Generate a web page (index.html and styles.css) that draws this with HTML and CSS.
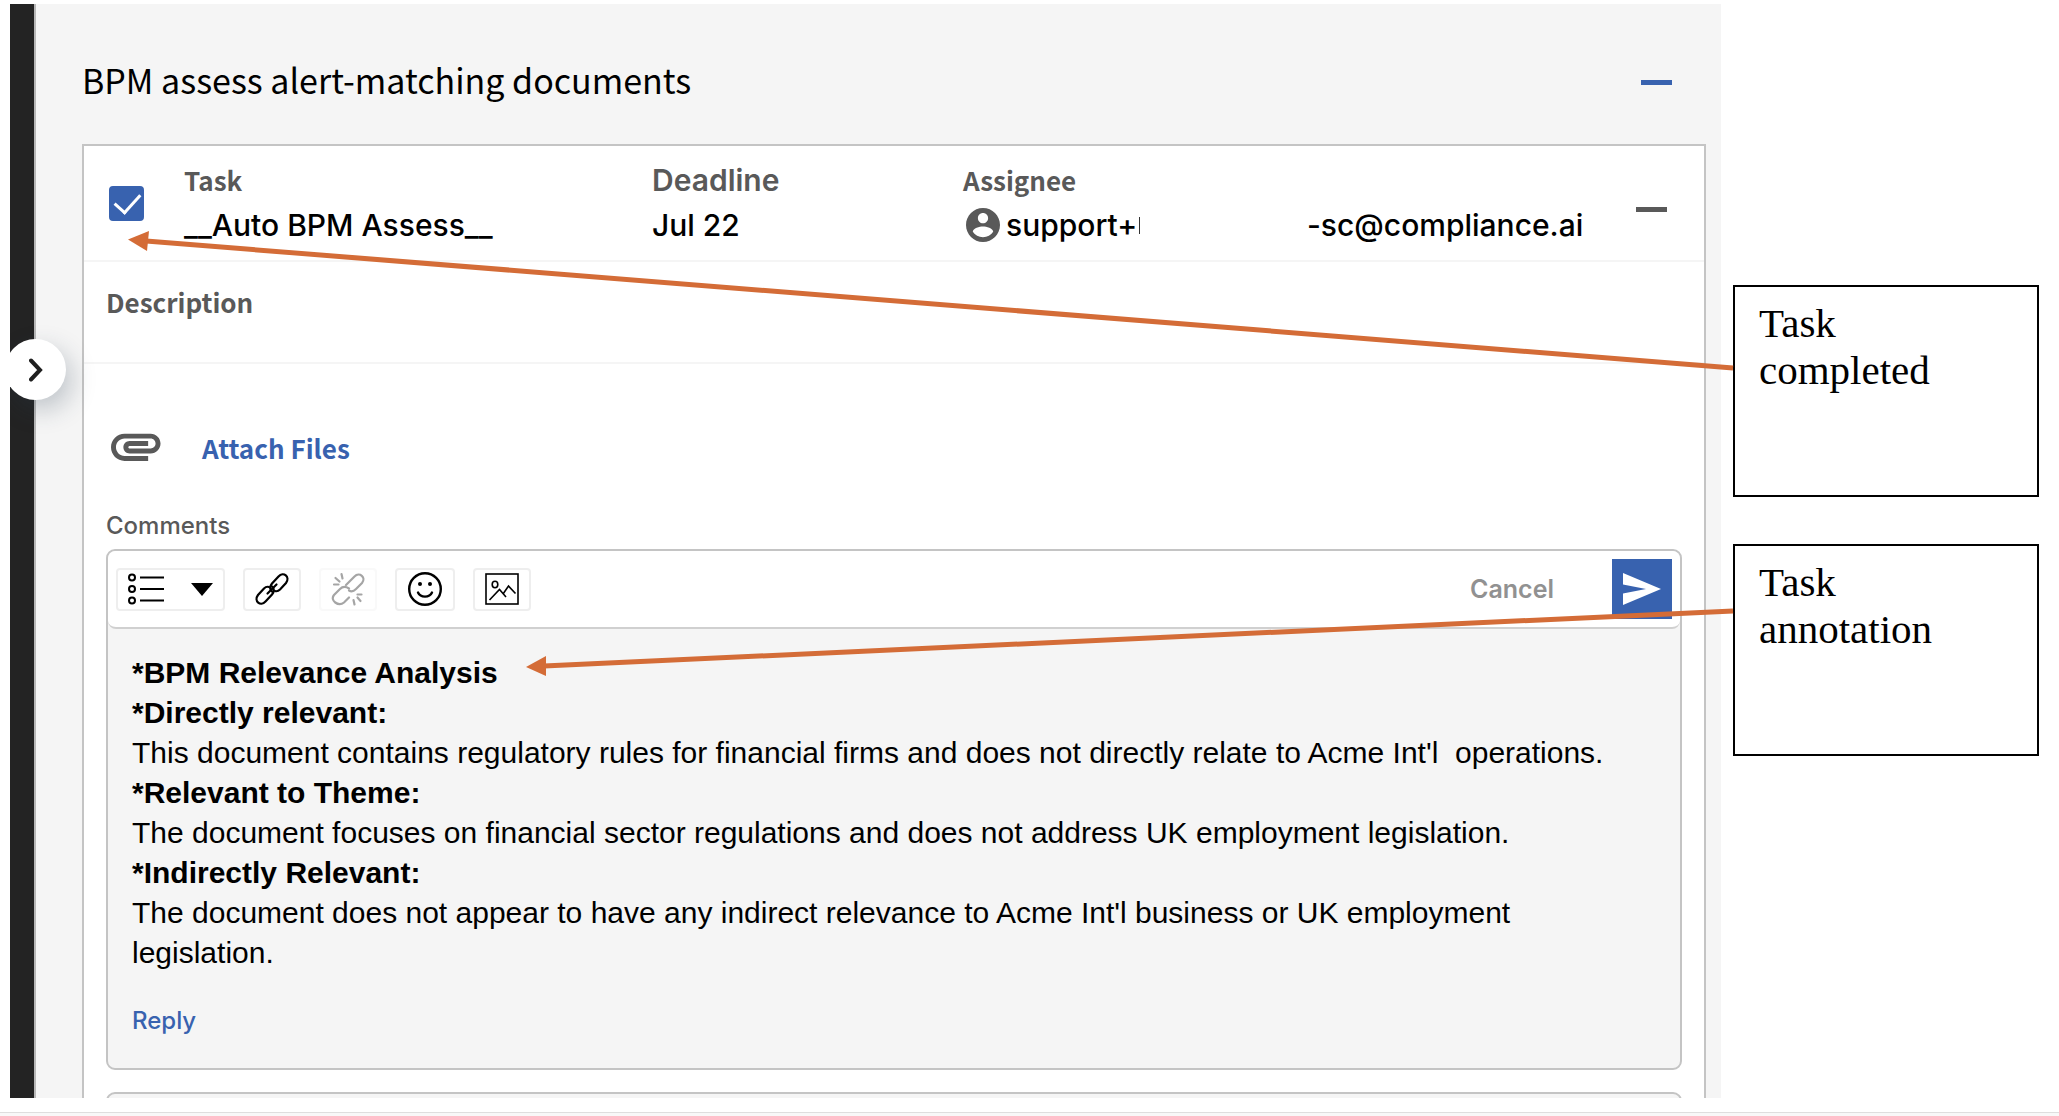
FILE: index.html
```html
<!DOCTYPE html>
<html lang="en">
<head>
  <meta charset="UTF-8">
  <meta name="viewport" content="width=device-width, initial-scale=1.0">
  <title>BPM assess alert-matching documents</title>
  <link rel="stylesheet" href="styles.css">
</head>
<body>
  <div class="app">
    <aside class="sidebar">
      <button class="sidebar-toggle" aria-label="Expand sidebar">
        <svg width="14" height="24" viewBox="0 0 14 24" fill="none" stroke="#1f1f1f" stroke-width="4" stroke-linecap="round"><path d="M2 2.5l9 9.500-9 9.500"/></svg>
      </button>
    </aside>

    <main class="panel">
      <header class="panel-header">
        <h1>BPM assess alert-matching documents</h1>
        <button class="collapse-btn" aria-label="Collapse section"></button>
      </header>

      <section class="task-card">
        <div class="task-row">
          <input type="checkbox" class="task-check" aria-label="Task completed" checked>
          <div class="field">
            <span class="label">Task</span>
            <span class="value">__Auto BPM Assess__</span>
          </div>
          <div class="field">
            <span class="label label-inter">Deadline</span>
            <span class="value">Jul 22</span>
          </div>
          <div class="field">
            <span class="label">Assignee</span>
            <span class="value assignee">
              <svg width="34" height="34" viewBox="2 2 20 20" fill="#595959"><path d="M12 2C6.480 2 2 6.480 2 12s4.480 10 10 10 10-4.480 10-10S17.520 2 12 2zm0 3c1.660 0 3 1.340 3 3s-1.340 3-3 3-3-1.340-3-3 1.340-3 3-3zm0 14.200c-2.500 0-4.710-1.280-6-3.220.030-1.990 4-3.080 6-3.080 1.990 0 5.970 1.090 6 3.080-1.290 1.940-3.500 3.220-6 3.220z"/></svg>
              <span class="mail-start">support+</span>
              <span>-sc@compliance.ai</span>
            </span>
          </div>
          <button class="collapse-btn muted" aria-label="Collapse task"></button>
        </div>

        <div class="description">
          <span class="label">Description</span>
        </div>

        <div class="task-body">
          <button class="attach">
            <svg width="52" height="30" viewBox="2 6.800 21 12" fill="#595959"><path d="M2 12.500C2 9.460 4.460 7 7.500 7H18c2.210 0 4 1.790 4 4s-1.790 4-4 4H9.500C8.120 15 7 13.880 7 12.500S8.120 10 9.500 10H17v2H9.410c-.550 0-.550 1 0 1H18c1.100 0 2-.900 2-2s-.900-2-2-2H7.500C5.570 9 4 10.570 4 12.500S5.570 16 7.500 16H17v2H7.500C4.460 18 2 15.540 2 12.500z"/></svg>
            <span>Attach Files</span>
          </button>

          <h2>Comments</h2>

          <article class="comment">
            <div class="toolbar">
              <button class="tool tool-list" aria-label="List style">
                <svg width="36" height="32" viewBox="0 0 36 32" fill="none" stroke="#000" stroke-width="2"><circle cx="4" cy="4.500" r="3"/><circle cx="4" cy="16" r="3"/><circle cx="4" cy="27.500" r="3"/><path d="M12 4.500h24M12 16h24M12 27.500h24"/></svg>
                <svg width="22" height="13" viewBox="0 0 22 13"><path d="M0 0h22L11 13z"/></svg>
              </button>
              <button class="tool" aria-label="Insert link">
                <svg width="34" height="34" viewBox="0 0 34 34" fill="none" stroke="#000" stroke-width="2.200" stroke-linecap="round"><path d="M17 19.500c-3-3-2-5.500 0-8l6.500-7c5-5.500 12 .500 7.500 6.500l-6 6.500c-1.500 1.500-3.500 2-5 1.500"/><path d="M17 14.500c3 3 2 5.500 0 8l-6.500 7C5.500 35-1.500 29 3 23l6-6.500c1.500-1.500 3.500-2 5-1.500"/><path d="M12.500 21.500l9-9"/></svg>
              </button>
              <button class="tool" aria-label="Remove link" disabled>
                <svg width="34" height="34" viewBox="0 0 34 34" fill="none" stroke="#000" stroke-width="2.200" stroke-linecap="round"><path d="M15 13l8.500-8.500c5-5 12 1 7.500 6.500l-6 6c-2 2-4.500 3-7 1.500"/><path d="M18 25.500l-5 5C7.500 35-1.500 28.500 3 23l6-6c3-3 6-2.500 9-.500"/><path d="M10.500 2l1 4.500M4.500 6l4 3.500M3 12.500h4.500M22.500 28l1 4.500M26.500 25.500l3 3.500M26.500 22.500h4"/></svg>
              </button>
              <button class="tool" aria-label="Insert emoji">
                <svg width="36" height="36" viewBox="0 0 36 36" fill="none" stroke="#000" stroke-width="2.400" stroke-linecap="round"><circle cx="18" cy="18" r="15.800"/><path d="M11 21.500c2.500 5.500 11.500 5.500 14 0"/><circle cx="13" cy="13" r="2" fill="#000" stroke="none"/><circle cx="23" cy="13" r="2" fill="#000" stroke="none"/></svg>
              </button>
              <button class="tool" aria-label="Insert image">
                <svg width="34" height="32" viewBox="0 0 34 32" fill="none" stroke="#000" stroke-width="1.600"><rect x="1" y="1" width="32" height="30"/><ellipse cx="10" cy="11.500" rx="2.800" ry="3.200"/><path d="M4.500 27l10-10.500 6.500 7.500M18 21l5.500-8 7 7.500"/></svg>
              </button>
              <div class="toolbar-actions">
                <button class="cancel-btn">Cancel</button>
                <button class="send-btn" aria-label="Send comment">
                  <svg width="38" height="32" viewBox="0 0 38 32" fill="#fff"><path d="M0 0l38 16L0 32V20.500L23 16 0 11.500z"/></svg>
                </button>
              </div>
            </div>
            <div class="comment-text">
              <p><strong>*BPM Relevance Analysis</strong></p>
              <p><strong>*Directly relevant:</strong></p>
              <p>This document contains regulatory rules for financial firms and does not directly relate to Acme Int'l&nbsp; operations.</p>
              <p><strong>*Relevant to Theme:</strong></p>
              <p>The document focuses on financial sector regulations and does not address UK employment legislation.</p>
              <p><strong>*Indirectly Relevant:</strong></p>
              <p>The document does not appear to have any indirect relevance to Acme Int'l business or UK employment legislation.</p>
              <button class="reply-btn">Reply</button>
            </div>
          </article>

          <article class="comment next-comment"></article>
        </div>
      </section>
    </main>

    <div class="notes">
      <div class="note">Task<br>completed</div>
      <div class="note">Task<br>annotation</div>
    </div>

    <!-- callout arrows, drawn over the panel -->
    <svg class="arrows" fill="#d46c37" stroke="#d46c37" aria-hidden="true">
      <line x1="1733" y1="364" x2="146" y2="237" stroke-width="5"/>
      <path d="M128 235.500l21-8.500-2 20z" stroke="none"/>
      <line x1="1733" y1="607" x2="544" y2="662" stroke-width="5"/>
      <path d="M526 663l20-11v20z" stroke="none"/>
    </svg>
  </div>
  <footer class="page-edge"></footer>
</body>
</html>
```

FILE: styles.css
```css
* {
  margin: 0;
  padding: 0;
  box-sizing: border-box;
}
body {
  display: flex;
  flex-direction: column;
  height: 100vh;
  padding-top: 4px;
  font-family: Inter, "Liberation Sans", sans-serif;
  color: #000;
  background: #fff;
  overflow: hidden;
}
button {
  border: none;
  background: none;
  font: inherit;
  color: inherit;
  cursor: pointer;
}
svg {
  display: block;
  flex: none;
}
.app {
  position: relative;
  display: flex;
  flex: 1;
  min-height: 0;
  padding-left: 10px;
}
.page-edge {
  height: 4px;
  margin-top: 14px;
  border-top: 1px solid #dedede;
  background: #f8f8f8;
}

/* sidebar */
.sidebar {
  flex: none;
  width: 26px;
  background: #232323;
  border-right: 2px solid #b8b8b8;
}
.sidebar-toggle {
  position: absolute;
  z-index: 2;
  top: 335px;
  left: 5px;
  display: flex;
  align-items: center;
  justify-content: center;
  width: 61px;
  height: 61px;
  border-radius: 50%;
  background: #fff;
  box-shadow: 6px 10px 24px rgba(40, 60, 80, 0.25);
  clip-path: inset(-40px -40px -40px 5px);
}

/* panel */
.panel {
  flex: 1;
  display: flex;
  flex-direction: column;
  min-width: 0;
  padding: 52px 15px 0 46px;
  background: #f5f5f5;
  overflow: hidden;
}
.panel-header {
  display: flex;
  align-items: center;
  justify-content: space-between;
  height: 52px;
  margin-bottom: 36px;
  padding-right: 34px;
}
h1 {
  font-family: "Noto Sans CJK SC", sans-serif;
  font-size: 34px;
  font-weight: 400;
  line-height: 48px;
  padding-bottom: 4px;
}
.collapse-btn {
  width: 31px;
  height: 5px;
  background: #3862af;
}
.collapse-btn.muted {
  background: #595959;
  margin-top: 12px;
}

/* task card */
.task-card {
  flex: 1;
  min-height: 0;
  border: 2px solid #c4c4c4;
  border-bottom: none;
  background: #fff;
}
.task-row {
  display: grid;
  grid-template-columns: 75px 468px 311px 1fr 31px;
  align-items: center;
  height: 116px;
  padding: 0 37px 0 25px;
  border-bottom: 2px solid #f5f5f5;
}
.task-check {
  appearance: none;
  width: 35px;
  height: 35px;
  border-radius: 4px;
  background: #fff;
  border: 2px solid #3862af;
}
.task-check:checked {
  background: #3862af;
}
.task-check:checked::after {
  content: '';
  display: block;
  width: 12px;
  height: 22px;
  margin: 0 0 0 9px;
  border: solid #fff;
  border-width: 0 3px 3px 0;
  transform: rotate(42deg);
}
.field {
  display: flex;
  flex-direction: column;
  gap: 4px;
}
.label {
  font-family: "Noto Sans CJK SC", sans-serif;
  font-size: 26px;
  font-weight: 700;
  line-height: 40px;
  color: #595959;
}
.label-inter {
  font-family: Inter, sans-serif;
  font-size: 30px;
  font-weight: 600;
}
.value {
  font-size: 30px;
  font-weight: 500;
  line-height: 42px;
}
.assignee {
  display: flex;
  align-items: center;
  gap: 6px;
  padding-left: 3px;
}
.mail-start {
  display: flex;
  align-items: center;
  gap: 2px;
  width: 295px;
}
.mail-start::after {
  content: '';
  width: 1px;
  height: 17px;
  background: #333;
}
.description {
  height: 102px;
  padding: 20px 22px;
  border-bottom: 2px solid #f5f5f5;
}
.task-body {
  padding: 60px 22px 0;
}
.attach {
  display: flex;
  align-items: center;
  gap: 39px;
  padding-left: 5px;
  font-family: "Noto Sans CJK SC", sans-serif;
  font-size: 26px;
  font-weight: 700;
  line-height: 48px;
  color: #3862af;
}
h2 {
  margin: 36px 0 5px;
  font-size: 24px;
  font-weight: 500;
  line-height: 36px;
  color: #595959;
}

/* comments */
.comment {
  border: 2px solid #c4c4c4;
  border-radius: 9px;
  background: #f5f5f5;
}
.toolbar {
  display: flex;
  align-items: center;
  gap: 18px;
  height: 78px;
  padding: 0 8px;
  background: #fff;
  border-bottom: 2px solid #d0d0d0;
  border-radius: 8px;
}
.tool {
  display: flex;
  align-items: center;
  justify-content: center;
  height: 43px;
  padding: 0 10px;
  border: 2px solid #eee;
  border-radius: 4px;
}
.tool-list {
  gap: 27px;
}
.tool:disabled {
  opacity: 0.35;
}
.toolbar-actions {
  display: flex;
  align-items: center;
  gap: 58px;
  margin-left: auto;
}
.cancel-btn {
  font-size: 25px;
  font-weight: 600;
  color: #919191;
}
.send-btn {
  display: flex;
  align-items: center;
  justify-content: center;
  width: 60px;
  height: 60px;
  background: #3862af;
}
.comment-text {
  padding: 24px 25px 27px 24px;
  font-family: "Liberation Sans", Arial, sans-serif;
  font-size: 30px;
  line-height: 40px;
}
.reply-btn {
  display: block;
  margin-top: 28px;
  font-family: Inter, sans-serif;
  font-size: 24px;
  font-weight: 500;
  color: #3862af;
}
.next-comment {
  height: 120px;
  margin-top: 22px;
}

/* callouts */
.notes {
  display: flex;
  flex-direction: column;
  gap: 47px;
  width: 338px;
  padding: 281px 20px 0 12px;
}
.note {
  height: 212px;
  padding: 13px 24px;
  border: 2px solid #000;
  background: #fff;
  font-family: "Liberation Serif", "Times New Roman", serif;
  font-size: 41px;
  line-height: 47px;
}
.arrows {
  position: absolute;
  z-index: 3;
  top: 0;
  left: 0;
  width: 100%;
  height: 100%;
  pointer-events: none;
}
```
